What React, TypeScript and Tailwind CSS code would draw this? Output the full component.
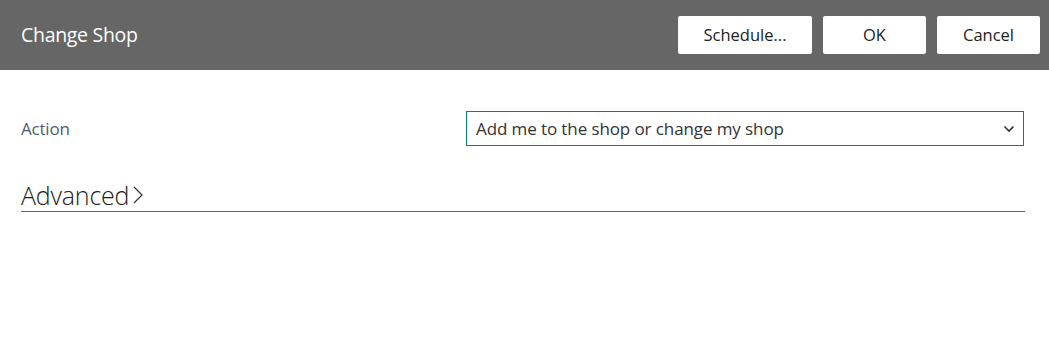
import React from "react";

const App = () => {
  return (
    <div
      className="w-[1049px] h-[362px] bg-white text-[#212121]"
      style={{ fontFamily: '"Open Sans", "Noto Sans", sans-serif' }}
    >
      <header className="h-[70px] bg-[#666666] flex items-center justify-between pl-[21px] pr-[9px]">
        <h1 className="text-white text-[19.5px] tracking-[-0.3px]">Change Shop</h1>
        <div className="flex gap-[11px]">
          <button className="w-[134px] h-[38px] bg-white rounded-[2px] text-[16.5px] text-[#212121]">
            Schedule...
          </button>
          <button className="w-[103px] h-[38px] bg-white rounded-[2px] text-[16.5px] text-[#212121]">
            OK
          </button>
          <button className="w-[103px] h-[38px] bg-white rounded-[2px] text-[16.5px] text-[#212121]">
            Cancel
          </button>
        </div>
      </header>

      <main className="pl-[21px] pr-[24px] pt-[41px]">
        <div className="flex items-center justify-between pr-[1px]">
          <span className="text-[17px] text-[#505c6d] tracking-[-0.2px]">Action</span>
          <div className="w-[558px] h-[35px] border border-[#00818a] flex items-center justify-between pl-[9px] pr-[8px]">
            <span className="text-[17px] text-[#333333] tracking-[-0.1px]">
              Add me to the shop or change my shop
            </span>
            <svg width="12" height="8" viewBox="0 0 12 8" fill="none">
              <path d="M1.5 1.5 L6 6 L10.5 1.5" stroke="#333333" strokeWidth="1.6" />
            </svg>
          </div>
        </div>

        <div className="mt-[33px] border-b border-[#666666] flex items-center">
          <span className="text-[25px] font-light text-[#212121] leading-[32px] tracking-[-0.2px]">Advanced</span>
          <svg width="14" height="24" viewBox="0 0 14 24" fill="none" className="ml-[2px]">
            <path d="M3 4 L11 12 L3 20" stroke="#333333" strokeWidth="1.2" />
          </svg>
        </div>
      </main>
    </div>
  );
};

export default App;
